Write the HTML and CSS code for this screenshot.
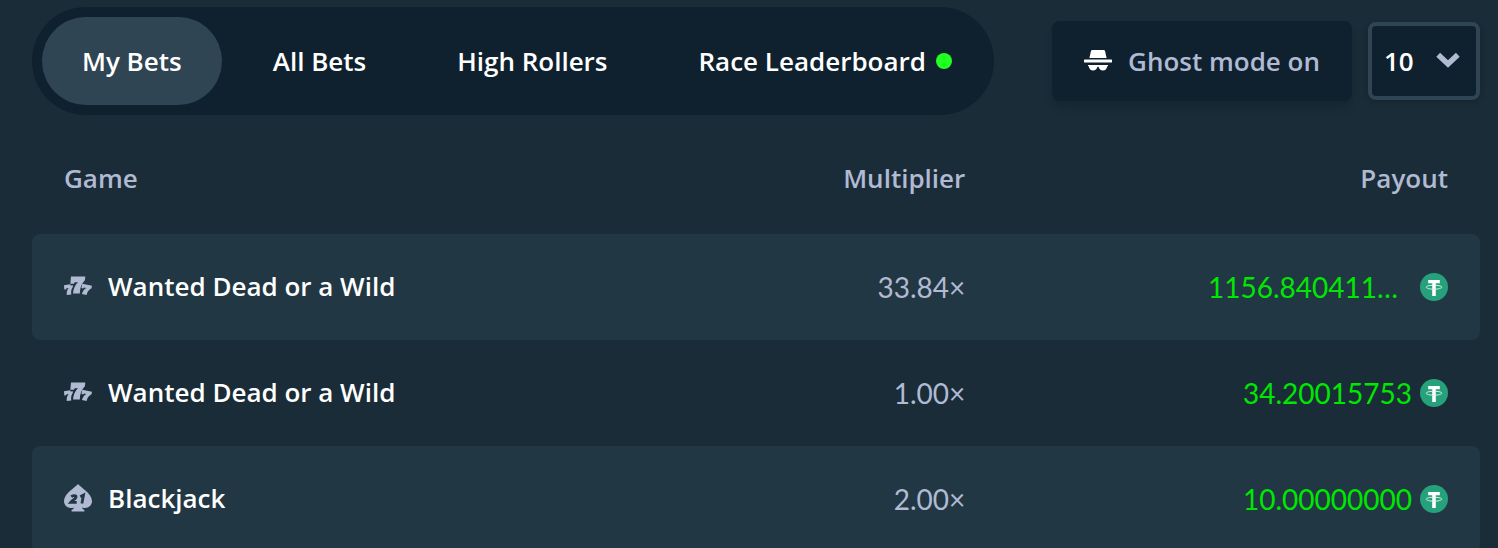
FILE: index.html
```
<!DOCTYPE html>
<html lang="en">
<head>
  <meta charset="utf-8">
  <meta name="viewport" content="width=device-width, initial-scale=1">
  <title>My Bets</title>
  <link rel="stylesheet" href="styles.css">
</head>
<body>
  <svg class="sprite" aria-hidden="true">
    <symbol id="slots" viewBox="0 0 28 28">
      <g fill="currentColor">
        <path d="M7 4.500h14.300l-.4 3.700c-3.400 3.400-5 7.600-5.100 13.300H9c.3-4.600 2-8.300 5-11.200h-3.400l-.5 1.500H6.300z"/>
        <path d="M0 13.200l6.300-1 .2 1.300 2.500-.3-.3 2c-1.500 2-1.800 4.200-1.400 7.200l-4.500.7c-.4-3 .3-5.300 1.800-7.200l-2.200.4-.1 1-2 .3z"/>
        <path d="M18.300 11.800l9.700 2-.5 2.500c-2.700 1.400-4.200 3.500-4.900 6.700l-4.700-.9c.7-2.900 2.200-4.900 4.400-6.200l-2.400-.5-.6 1-1.900-.4z"/>
      </g>
    </symbol>
    <symbol id="spade" viewBox="0 0 28 28">
      <path fill="currentColor" fill-rule="evenodd" d="M14 0C12 3 0 9.500 0 17c0 4 3 7 7 7 1 0 2-.2 3-.6-.3 1.300-1.200 2.100-2.400 2.500V27.500h12.800v-1.600c-1.200-.4-2.100-1.200-2.400-2.500 1 .4 2 .6 3 .6 4 0 7-3 7-7C28 9.500 16 3 14 0z"/>
      <path class="cutout" stroke-width="2.800" d="M7.300 12.700c1.500-1.700 5-1.500 4.700.3-.3 2-3.500 3.300-5.300 5.400h6M16.300 12.700l3.200-1.700-1.600 8.600"/>
    </symbol>
    <symbol id="tether" viewBox="0 0 28 28">
      <circle cx="14" cy="14" r="14" fill="#26a17b"/>
      <path d="M8.200 7h11.600v3.300h-4V23h-3.600V10.300h-4z" fill="#fff"/>
      <path d="M12.200 12.300c-3.500.2-6 .9-6 1.900s3.500 2 7.800 2 7.800-1 7.800-2-2.500-1.700-6-1.900" fill="none" stroke="#d6f0e7" stroke-width="1"/>
    </symbol>
  </svg>

  <main class="bets">
    <header class="toolbar">
      <nav class="tabs" aria-label="Bets">
        <button class="tab tab-active" type="button">My Bets</button>
        <button class="tab" type="button">All Bets</button>
        <button class="tab" type="button">High Rollers</button>
        <button class="tab" type="button">Race Leaderboard<span class="live-dot"></span></button>
      </nav>
      <div class="controls">
        <button class="ghost" type="button">
          <svg class="icon ghost-icon" viewBox="0 0 28 28" aria-hidden="true">
            <path fill="currentColor" d="M8.500 3h11c.8 0 1.400.4 1.600 1.200L22.600 11H5.400l1.500-6.800C7.100 3.400 7.700 3 8.500 3zM1 12.500h26a1 1 0 0 1 0 3H1a1 1 0 0 1 0-3zM4 18h20v1.200h-.8c-.3 2.800-2 4.300-4.400 4.300-2.100 0-3.500-1.300-4.200-3.400-.3-.5-.9-.5-1.200 0-.7 2.100-2.100 3.400-4.200 3.400-2.400 0-4.100-1.500-4.400-4.300H4z"/>
          </svg>
          Ghost mode on
        </button>
        <div class="limit">
          <select class="limit-select" aria-label="Rows shown">
            <option>10</option><option>20</option><option>30</option><option>40</option>
          </select>
          <svg class="limit-arrow" viewBox="0 0 24 16" aria-hidden="true"><path d="M2.200 2.700 12 12l9.800-9.300" fill="none" stroke="currentColor" stroke-width="5.500"/></svg>
        </div>
      </div>
    </header>

    <table class="table">
      <thead>
        <tr><th scope="col">Game</th><th scope="col">Multiplier</th><th scope="col">Payout</th></tr>
      </thead>
      <tbody>
        <tr>
          <td><a class="game" href="#"><svg class="icon game-icon" aria-hidden="true"><use href="#slots"/></svg>Wanted Dead or a Wild</a></td>
          <td class="number">33.84×</td>
          <td class="number"><span class="payout"><span class="amount amount-clipped">1156.840411…</span><svg class="icon" aria-label="USDT"><use href="#tether"/></svg></span></td>
        </tr>
        <tr>
          <td><a class="game" href="#"><svg class="icon game-icon" aria-hidden="true"><use href="#slots"/></svg>Wanted Dead or a Wild</a></td>
          <td class="number">1.00×</td>
          <td class="number"><span class="payout"><span class="amount">34.20015753</span><svg class="icon" aria-label="USDT"><use href="#tether"/></svg></span></td>
        </tr>
        <tr>
          <td><a class="game" href="#"><svg class="icon game-icon" aria-hidden="true"><use href="#spade"/></svg>Blackjack</a></td>
          <td class="number">2.00×</td>
          <td class="number"><span class="payout"><span class="amount">10.00000000</span><svg class="icon" aria-label="USDT"><use href="#tether"/></svg></span></td>
        </tr>
      </tbody>
    </table>
  </main>
</body>
</html>
```
FILE: styles.css
```
:root {
  --page: #1a2c38;
  --deep: #0f212e;
  --raised: #2f4553;
  --stripe: #213743;
  --muted: #b1bad3;
  --win: #00e701;
  --live: #1fff20;
}

* { box-sizing: border-box; }

body {
  margin: 0;
  background: var(--page);
  color: #fff;
  font: 600 26px/36px "Open Sans", "Noto Sans", sans-serif;
}

button, select { font: inherit; color: inherit; border: 0; cursor: pointer; }

.sprite { position: absolute; width: 0; height: 0; }
.cutout { fill: none; stroke: var(--row-bg, var(--page)); }

.icon { width: 28px; height: 28px; flex: none; }

.bets { padding: 7px 18px 0 32px; }

.toolbar {
  display: flex;
  align-items: center;
  justify-content: space-between;
  gap: 16px;
  margin-bottom: 8px;
}

.tabs {
  display: flex;
  gap: 11px;
  padding: 10px 2px 10px 10px;
  border-radius: 54px;
  background: var(--deep);
}

.tab {
  display: flex;
  align-items: center;
  gap: 10px;
  padding: 26px 40px;
  border-radius: 44px;
  background: transparent;
  white-space: nowrap;
}
.tab-active { background: var(--raised); }
.live-dot { width: 16px; height: 16px; border-radius: 50%; background: var(--live); }

.controls { display: flex; align-items: center; gap: 16px; }

.ghost {
  display: flex;
  align-items: center;
  gap: 16px;
  padding: 22px 32px;
  border-radius: 8px;
  background: var(--deep);
  color: var(--muted);
  white-space: nowrap;
  box-shadow: 0 8px 12px -2px rgba(0, 0, 0, 0.1), 0 4px 6px -2px rgba(0, 0, 0, 0.1);
}
.ghost-icon { color: #fff; }

.limit { position: relative; }
.limit-select {
  display: block;
  appearance: none;
  width: 112px;
  padding: 17px 50px 17px 12px;
  border: 4px solid var(--raised);
  border-radius: 8px;
  background: var(--deep);
  box-shadow: 0 2px 6px rgba(0, 0, 0, 0.2);
}
.limit-arrow {
  position: absolute;
  top: 30px;
  right: 20px;
  width: 24px;
  height: 16px;
  color: var(--muted);
  pointer-events: none;
}

.table { width: 100%; table-layout: fixed; border-collapse: collapse; }
.table th { padding: 37px 32px 38px; color: var(--muted); font-weight: 600; text-align: right; }
.table th:first-child { text-align: left; }
.table td { padding: 35px 32px; white-space: nowrap; }
.table td:first-child { padding: 34px 32px 36px; }
.table tbody tr:nth-child(odd) { --row-bg: var(--stripe); }
.table tbody tr:nth-child(odd) td { background: var(--stripe); }
.table td:first-child { border-radius: 8px 0 0 8px; }
.table td:last-child { border-radius: 0 8px 8px 0; }

.game { display: flex; align-items: center; gap: 16px; color: inherit; text-decoration: none; }
.game-icon { color: var(--muted); }

.number { color: var(--muted); font: 400 28px/36px Lato, sans-serif; text-align: right; }
.payout { display: flex; align-items: center; justify-content: flex-end; gap: 8px; color: var(--win); }
.amount-clipped { width: 204px; text-align: left; }
```
